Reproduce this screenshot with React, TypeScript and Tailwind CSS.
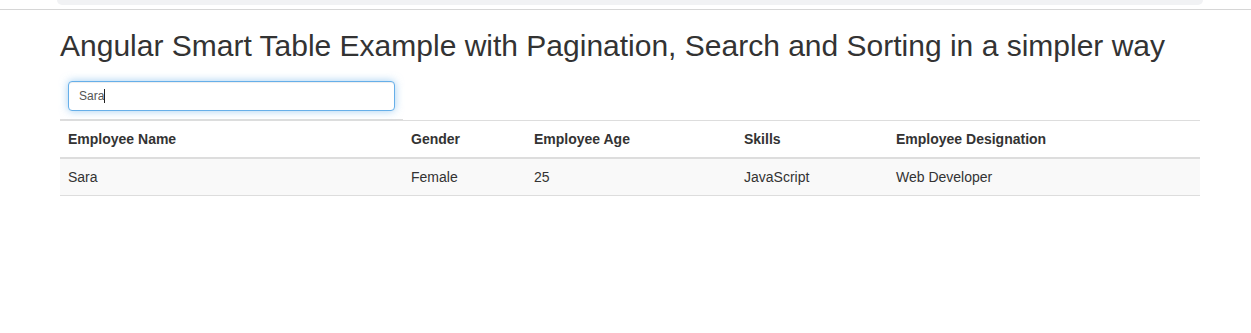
const columns = [
  { label: "Employee Name", width: "w-[343px]" },
  { label: "Gender", width: "w-[123px]" },
  { label: "Employee Age", width: "w-[210px]" },
  { label: "Skills", width: "w-[152px]" },
  { label: "Employee Designation", width: "w-[312px]" },
];

const rows = [["Sara", "Female", "25", "JavaScript", "Web Developer"]];

export default function App() {
  return (
    <div className="min-h-[333px] bg-white text-[#333] font-['Liberation_Sans',Arial,sans-serif]">
      {/* top chrome */}
      <div className="ml-[57px] w-[1146px] h-[5px] bg-[#f1f2f4] rounded-b-[10px]" />
      <div className="mt-[4px] h-px bg-[#d6d6d6]" />

      <div className="ml-[60px] w-[1140px]">
        <h1 className="mt-[19px] mb-[11px] text-[30px] leading-[33px] font-normal text-[#333]">
          Angular Smart Table Example with Pagination, Search and Sorting in a simpler way
        </h1>

        {/* search row */}
        <div className="flex">
          <div className="w-[343px] p-2 border-b border-[#ddd]">
            <div className="w-[327px] h-[30px] flex items-center px-[10px] border border-[#66afe9] rounded-[4px] bg-white text-[12px] text-[#555] shadow-[inset_0_1px_1px_rgba(0,0,0,0.075),0_0_8px_rgba(102,175,233,0.6)]">
              <span>Sara</span>
              <span className="w-px h-[14px] bg-[#222]" />
            </div>
          </div>
        </div>

        {/* header */}
        <div className="flex border-t border-b-2 border-[#ddd]">
          {columns.map((c) => (
            <div key={c.label} className={`${c.width} p-2 text-[14px] leading-5 font-bold`}>
              {c.label}
            </div>
          ))}
        </div>

        {/* body */}
        {rows.map((r, i) => (
          <div key={i} className="flex bg-[#f9f9f9] border-b border-[#ddd]">
            {r.map((v, j) => (
              <div key={j} className={`${columns[j].width} p-2 text-[14px] leading-5`}>
                {v}
              </div>
            ))}
          </div>
        ))}
      </div>
    </div>
  );
}
